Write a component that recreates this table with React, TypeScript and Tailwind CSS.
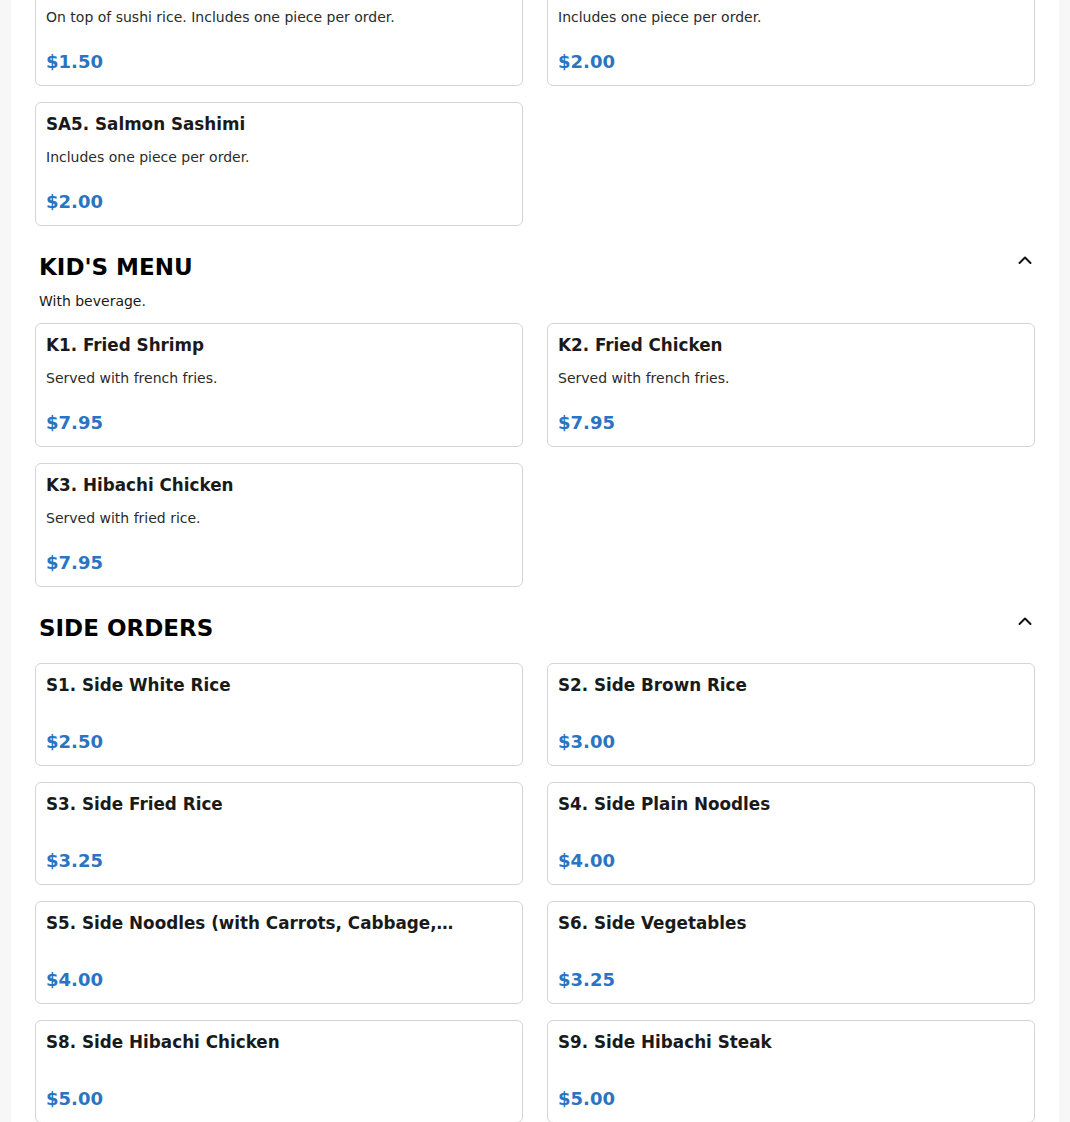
import React from "react";

type Item = { name: string; desc?: string; price: string };

const firstRow: Item[] = [
  { name: "SA3. Tamago Sushi", desc: "On top of sushi rice. Includes one piece per order.", price: "$1.50" },
  { name: "SA4. Tuna Sashimi", desc: "Includes one piece per order.", price: "$2.00" },
  { name: "SA5. Salmon Sashimi", desc: "Includes one piece per order.", price: "$2.00" },
];

const kids: Item[] = [
  { name: "K1. Fried Shrimp", desc: "Served with french fries.", price: "$7.95" },
  { name: "K2. Fried Chicken", desc: "Served with french fries.", price: "$7.95" },
  { name: "K3. Hibachi Chicken", desc: "Served with fried rice.", price: "$7.95" },
];

const sides: Item[] = [
  { name: "S1. Side White Rice", price: "$2.50" },
  { name: "S2. Side Brown Rice", price: "$3.00" },
  { name: "S3. Side Fried Rice", price: "$3.25" },
  { name: "S4. Side Plain Noodles", price: "$4.00" },
  { name: "S5. Side Noodles (with Carrots, Cabbage, and Onions)", price: "$4.00" },
  { name: "S6. Side Vegetables", price: "$3.25" },
  { name: "S8. Side Hibachi Chicken", price: "$5.00" },
  { name: "S9. Side Hibachi Steak", price: "$5.00" },
];

function Card({ item }: { item: Item }) {
  return (
    <div className="flex flex-col rounded-md border border-[#d4d4d4] bg-white px-2.5 pt-[11px] pb-[11px]">
      <h3 className="truncate pr-14 text-[1.05rem] font-bold leading-[21px] text-[#1a1a1a]">{item.name}</h3>
      {item.desc ? (
        <p className="mt-[12px] text-sm leading-5 text-[#2b2b2b]">{item.desc}</p>
      ) : null}
      <div
        className={
          (item.desc ? "mt-[22px]" : "mt-[33px]") +
          " text-lg font-bold leading-[25px] text-[#2a74c2]"
        }
      >
        {item.price}
      </div>
    </div>
  );
}

function Grid({ items }: { items: Item[] }) {
  return (
    <div className="grid grid-cols-2 gap-x-6 gap-y-4">
      {items.map((it) => (
        <Card key={it.name} item={it} />
      ))}
    </div>
  );
}

function Chevron() {
  return (
    <svg width="16" height="16" viewBox="0 0 16 16" className="-mt-0.5 mr-0.5 shrink-0" fill="none">
      <path d="M2.5 11 L8 5.5 L13.5 11" stroke="#111" strokeWidth="2" strokeLinecap="round" strokeLinejoin="round" />
    </svg>
  );
}

function Header({ title }: { title: string }) {
  return (
    <div className="flex items-start justify-between pl-1">
      <h2 className="text-[23px] font-bold leading-[27px] text-black">{title}</h2>
      <Chevron />
    </div>
  );
}

export default function App() {
  return (
    <div
      className="flex h-[1122px] justify-center overflow-hidden bg-[#f7f7f7]"
      style={{ fontFamily: '"DejaVu Sans", "Noto Sans", sans-serif' }}
    >
      <div className="w-[1048px] bg-white px-6">
        <div className="-mt-[38px]">
          <Grid items={firstRow} />
        </div>

        <section className="mt-[28px]">
          <Header title="KID'S MENU" />
          <p className="mt-[11px] pl-1 text-sm leading-[18px] text-[#1a1a1a]">With beverage.</p>
          <div className="mt-[13px]">
            <Grid items={kids} />
          </div>
        </section>

        <section className="mt-[28px]">
          <Header title="SIDE ORDERS" />
          <div className="mt-[21px]">
            <Grid items={sides} />
          </div>
        </section>
      </div>
    </div>
  );
}
